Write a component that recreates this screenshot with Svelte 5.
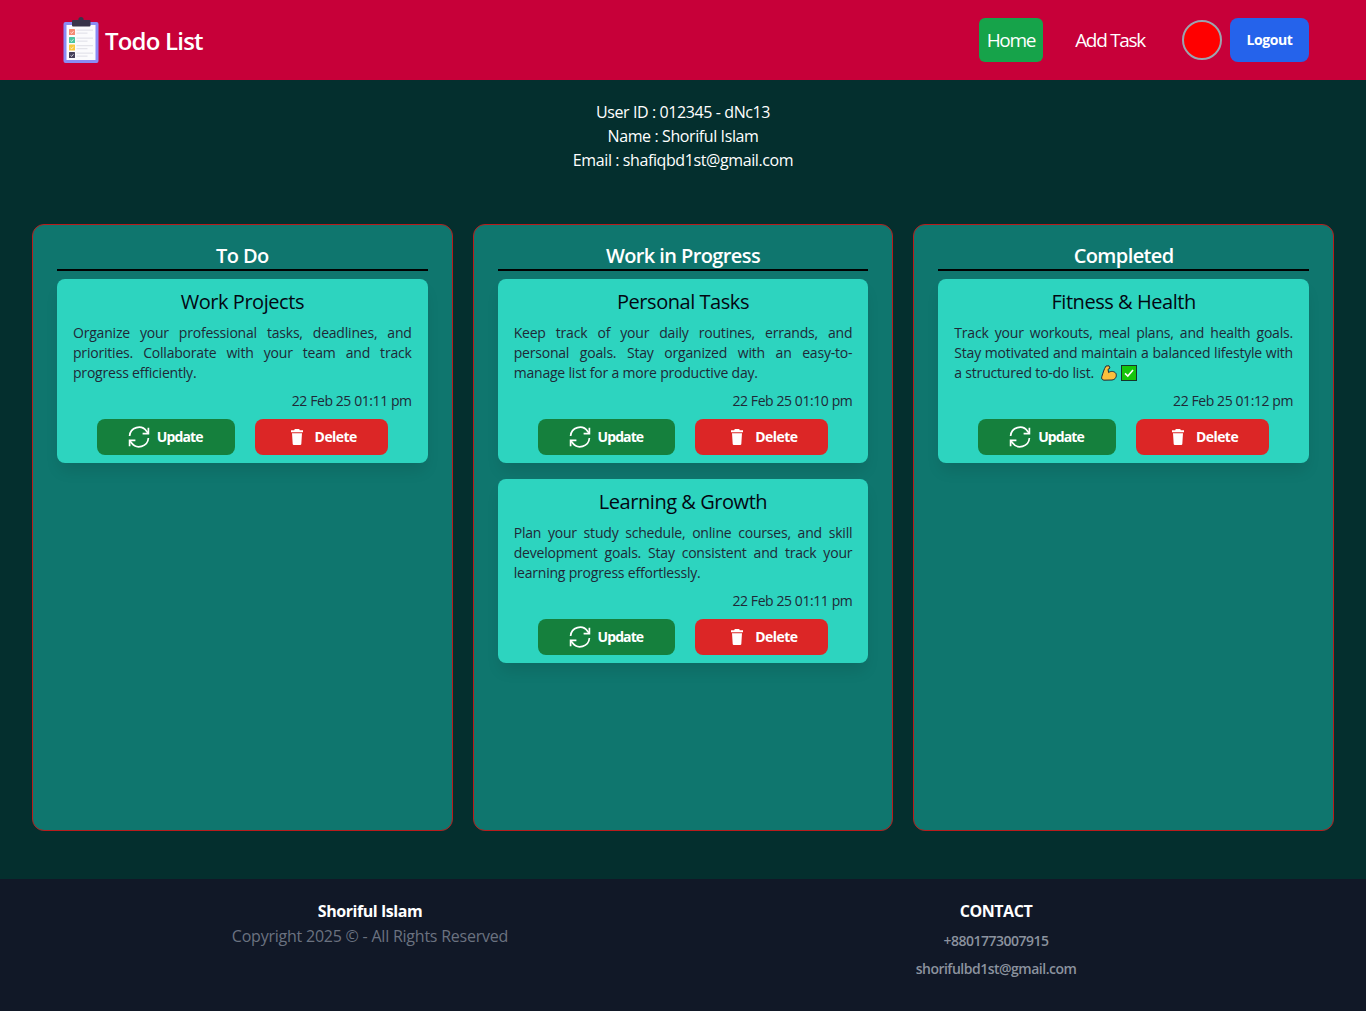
<script>
	const columns = [
		{
			title: 'To Do',
			tasks: [
				{
					title: 'Work Projects',
					text: 'Organize your professional tasks, deadlines, and priorities. Collaborate with your team and track progress efficiently.',
					date: '22 Feb 25 01:11 pm'
				}
			]
		},
		{
			title: 'Work in Progress',
			tasks: [
				{
					title: 'Personal Tasks',
					text: 'Keep track of your daily routines, errands, and personal goals. Stay organized with an easy-to-manage list for a more productive day.',
					date: '22 Feb 25 01:10 pm'
				},
				{
					title: 'Learning & Growth',
					text: 'Plan your study schedule, online courses, and skill development goals. Stay consistent and track your learning progress effortlessly.',
					date: '22 Feb 25 01:11 pm'
				}
			]
		},
		{
			title: 'Completed',
			tasks: [
				{
					title: 'Fitness & Health',
					text: 'Track your workouts, meal plans, and health goals. Stay motivated and maintain a balanced lifestyle with a structured to-do list.',
					date: '22 Feb 25 01:12 pm',
					emoji: true
				}
			]
		}
	];
	const rows = [
		{ y: 29, color: '#f58a73' },
		{ y: 37, color: '#4cc5a0' },
		{ y: 44.5, color: '#f8c93e' },
		{ y: 52, color: '#45405a' }
	];
</script>

<header class="navbar">
	<div class="brand">
		<svg class="logo" viewBox="62 16 38 48" width="38" height="48">
			<rect x="63.5" y="22" width="35" height="41" rx="2" fill="#8a8cf5" />
			<rect x="66.5" y="25" width="29" height="35" fill="#fbfbfd" />
			<circle cx="81" cy="19.5" r="2.6" fill="#38344a" />
			<rect x="72" y="20" width="18.5" height="6.5" rx="1" fill="#38344a" />
			{#each rows as row}
				<rect x="69" y={row.y} width="6" height="6" rx="0.6" fill={row.color} />
				<path d={`M70.5 ${row.y + 3.4} l1.2 1 l1.8 -2.2`} fill="none" stroke="#fff" stroke-width="0.7" />
				<rect x="76.5" y={row.y + 0.6} width="16.5" height="1.1" fill="#e2e2e8" />
				<rect x="76.5" y={row.y + 3.6} width="11" height="1.1" fill="#e2e2e8" />
			{/each}
		</svg>
		<span>Todo List</span>
	</div>
	<nav>
		<a class="link active" href="#home">Home</a>
		<a class="link" href="#add">Add Task</a>
		<div class="avatar"></div>
		<button class="logout">Logout</button>
	</nav>
</header>

<main>
	<section class="user">
		<p>User ID : 012345 - dNc13</p>
		<p>Name : Shoriful Islam</p>
		<p>Email : shafiqbd1st@gmail.com</p>
	</section>

	<section class="board">
		{#each columns as col}
			<div class="column">
				<h2>{col.title}</h2>
				{#each col.tasks as task}
					<article class="card">
						<h3>{task.title}</h3>
						<p class="desc">
							{task.text}
							{#if task.emoji}
								<svg class="emoji" viewBox="0 0 16 16" width="16" height="16">
									<path d="M5 1 L8 0.8 L9 3 L7 4.4 L7.6 7.6 C9.6 5.8 13.4 6 15 8.6 C16 11.6 14.4 14.6 11 15 L3 15.2 C1 15 0.2 13.4 0.8 11.6 C2 8 3 4 5 1 Z" fill="#fbbf3c" stroke="#1f2937" stroke-width="1" stroke-linejoin="round" />
								</svg>
								<svg class="emoji" viewBox="0 0 16 16" width="16" height="16">
									<rect x="0.5" y="0.5" width="15" height="15" fill="#16c60c" stroke="#14352b" />
									<path d="M4 8.4 L6.8 11 L12 5" fill="none" stroke="#fff" stroke-width="1.6" />
								</svg>
							{/if}
						</p>
						<p class="date">{task.date}</p>
						<div class="actions">
							<button class="btn update">
								<svg viewBox="0 0 24 24" width="24" height="24" fill="none" stroke="#fff" stroke-width="1.7">
									<path d="M2.6 11 A9.4 9.4 0 0 1 19.6 6.2 L21.4 8.6" />
									<path d="M21.4 2.8 V8.6 H15.6" />
									<path d="M21.4 13 A9.4 9.4 0 0 1 4.4 17.8 L2.6 15.4" />
									<path d="M2.6 21.2 V15.4 H8.4" />
								</svg>
								<span class="u-label">Update</span>
							</button>
							<button class="btn delete">
								<svg viewBox="0 0 20 20" width="20" height="20" fill="#fff">
									<path d="M7.8 2 H12.2 L12.8 3.2 H16 V5.2 H4 V3.2 H7.2 Z" />
									<path d="M5 6.2 H15 L14.3 17 Q14.2 18 13.2 18 H6.8 Q5.8 18 5.7 17 Z" />
								</svg>
								<span class="d-label">Delete</span>
							</button>
						</div>
					</article>
				{/each}
			</div>
		{/each}
	</section>
</main>

<footer>
	<div class="foot-col">
		<h4>Shoriful Islam</h4>
		<p class="copy">Copyright 2025 © - All Rights Reserved</p>
	</div>
	<div class="foot-col">
		<h4>CONTACT</h4>
		<p class="contact">+8801773007915</p>
		<p class="contact">shorifulbd1st@gmail.com</p>
	</div>
</footer>

<style>
	:global(body) {
		background: #042f2e;
		font-family: 'Open Sans', 'Noto Sans', sans-serif;
		color: #fff;
	}

	p,
	h2,
	h3,
	h4 {
		margin: 0;
	}

	.navbar {
		height: 80px;
		box-sizing: border-box;
		background: #c70039;
		display: flex;
		align-items: center;
		justify-content: space-between;
		padding: 0 57px 0 62px;
	}

	.brand {
		display: flex;
		align-items: center;
		gap: 5px;
		font-size: 24px;
		font-weight: 600;
		letter-spacing: -0.8px;
	}

	.logo {
		display: block;
	}

	nav {
		display: flex;
		align-items: center;
	}

	.link {
		color: #fff;
		text-decoration: none;
		font-size: 19px;
		line-height: 28px;
		padding: 8px;
		border-radius: 6px;
		letter-spacing: -1.3px;
		margin-right: 24px;
	}

	.link.active {
		background: #16a34a;
	}

	.avatar {
		width: 36px;
		height: 36px;
		border: 2px solid #9ca3af;
		border-radius: 50%;
		background: #ff0000;
		margin: 0 8px 0 5px;
	}

	.logout {
		width: 79px;
		height: 44px;
		border: 0;
		border-radius: 8px;
		background: #2563eb;
		color: #fff;
		font: 700 14px 'Open Sans', sans-serif;
		letter-spacing: -0.4px;
		padding: 0 0 2px;
	}

	.user {
		height: 144px;
		box-sizing: border-box;
		padding-top: 20px;
		text-align: center;
		font-size: 16px;
		line-height: 24px;
		letter-spacing: -0.4px;
	}

	.board {
		display: grid;
		grid-template-columns: repeat(3, 1fr);
		gap: 20px;
		padding: 0 32px;
	}

	.column {
		height: 607px;
		box-sizing: border-box;
		background: #0f766e;
		border: 1px solid #b91c1c;
		border-radius: 12px;
		padding: 16px 24px;
	}

	h2 {
		font-size: 20px;
		line-height: 30px;
		font-weight: 600;
		letter-spacing: -0.6px;
		text-align: center;
		border-bottom: 2px solid #000;
		height: 28px;
		margin-bottom: 8px;
	}

	.card {
		background: #2dd4bf;
		color: #030712;
		border-radius: 8px;
		height: 184px;
		box-sizing: border-box;
		padding: 8px 16px;
		margin-bottom: 16px;
		box-shadow: 0 10px 15px -3px rgb(0 0 0 / 0.1);
	}

	h3 {
		font-size: 20px;
		line-height: 30px;
		font-weight: 500;
		letter-spacing: -0.45px;
		text-align: center;
		margin-bottom: 6px;
	}

	.desc {
		font-size: 14px;
		line-height: 20px;
		height: 60px;
		font-weight: 500;
		color: #1f2937;
		text-align: justify;
		letter-spacing: -0.2px;
	}

	.emoji {
		vertical-align: -3px;
		margin-left: 4px;
	}

	.date {
		font-size: 14px;
		line-height: 20px;
		font-weight: 500;
		color: #1f2937;
		text-align: right;
		letter-spacing: -0.42px;
		margin-top: 8px;
		margin-bottom: 8px;
	}

	.actions {
		display: flex;
		justify-content: center;
		gap: 20px;
	}

	.btn {
		height: 36px;
		border: 0;
		border-radius: 8px;
		color: #fff;
		display: flex;
		align-items: center;
		font: 700 14px 'Open Sans', sans-serif;
	}

	.btn span {
		margin-bottom: 2px;
	}

	.update {
		background: #15803d;
		padding: 0 32px 0 30px;
	}

	.delete {
		background: #dc2626;
		padding: 0 31px 0 32px;
	}

	.u-label {
		margin-left: 6px;
		letter-spacing: -0.9px;
	}

	.d-label {
		margin-left: 8px;
		letter-spacing: -0.55px;
	}

	footer {
		margin-top: 48px;
		height: 132px;
		box-sizing: border-box;
		background: #111827;
		padding: 20px 57px 0;
		display: grid;
		grid-template-columns: 1fr 1fr;
		text-align: center;
	}

	h4 {
		font-size: 16px;
		line-height: 24px;
		font-weight: 700;
		letter-spacing: -0.45px;
	}

	.copy {
		font-size: 16px;
		line-height: 26px;
		color: #6b7280;
		letter-spacing: -0.23px;
	}

	.contact {
		font-size: 14px;
		line-height: 20px;
		font-weight: 600;
		color: #8b929e;
		letter-spacing: -0.5px;
		margin-top: 8px;
	}
</style>
